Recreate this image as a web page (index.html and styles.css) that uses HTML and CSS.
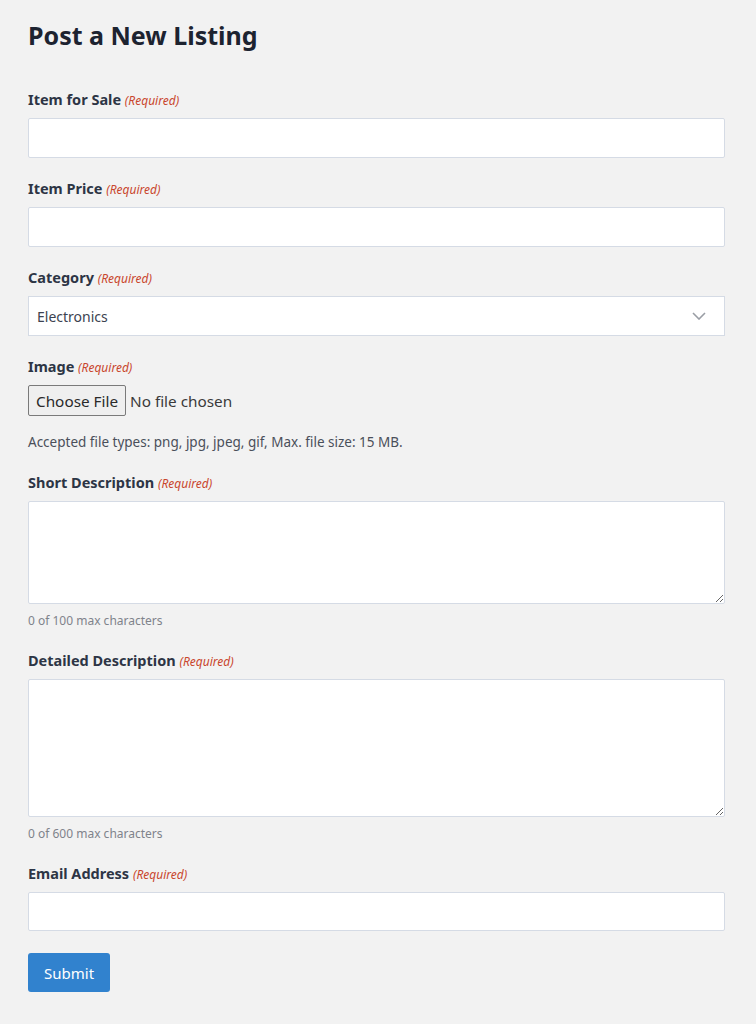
FILE: index.html
```html
<!DOCTYPE html>
<html lang="en">
<head>
    <meta charset="UTF-8">
    <meta name="viewport" content="width=device-width, initial-scale=1.0">
    <title>Post a New Listing</title>
    <link rel="stylesheet" href="styles.css">
</head>
<body>
    <div class="page">
        <h1 class="title">Post a New Listing</h1>
        <form class="listing">
            <div class="field">
                <label class="label">Item for Sale <span class="req">(Required)</span></label>
                <input class="text" type="text">
            </div>
            <div class="field">
                <label class="label">Item Price <span class="req">(Required)</span></label>
                <input class="text" type="text">
            </div>
            <div class="field">
                <label class="label">Category <span class="req">(Required)</span></label>
                <div class="select-wrap">
                    <select class="select">
                        <option>Electronics</option>
                    </select>
                    <svg class="chevron" width="14" height="8" viewBox="0 0 14 8">
                        <path d="M1 1 L7 7 L13 1" fill="none" stroke="#9a9ea5" stroke-width="1.6"/>
                    </svg>
                </div>
            </div>
            <div class="field">
                <label class="label">Image <span class="req">(Required)</span></label>
                <div class="file-row">
                    <span class="file-btn">Choose File</span>
                    <span class="file-name">No file chosen</span>
                </div>
                <div class="hint">Accepted file types: png, jpg, jpeg, gif, Max. file size: 15 MB.</div>
            </div>
            <div class="field">
                <label class="label">Short Description <span class="req">(Required)</span></label>
                <textarea class="area short"></textarea>
                <div class="count">0 of 100 max characters</div>
            </div>
            <div class="field">
                <label class="label">Detailed Description <span class="req">(Required)</span></label>
                <textarea class="area long"></textarea>
                <div class="count">0 of 600 max characters</div>
            </div>
            <div class="field">
                <label class="label">Email Address <span class="req">(Required)</span></label>
                <input class="text email" type="text">
            </div>
            <button class="submit" type="button">Submit</button>
        </form>
    </div>
</body>
</html>
```

FILE: styles.css
```css
body{
    margin: 0;
    background-color: #f2f2f2;
    font-family: "Noto Sans", "Open Sans", sans-serif;
    color: #3c4250;
}
.page{
    padding: 19px 31px 40px 28px;
}
.title{
    margin: 0 0 38px 0;
    font-size: 25px;
    line-height: 32px;
    font-weight: bold;
    color: #1d2330;
}
.field{
    margin-bottom: 20px;
}
.label{
    display: block;
    font-size: 14.5px;
    line-height: 20px;
    font-weight: bold;
    color: #2d3545;
    margin-bottom: 7px;
}
.req{
    font-size: 12px;
    font-weight: normal;
    font-style: italic;
    color: #c9452c;
}
.text, .select, .area{
    display: block;
    box-sizing: border-box;
    width: 100%;
    margin: 0;
    border: 1px solid #d5dbe5;
    border-radius: 2px;
    background-color: #ffffff;
    font-family: "Noto Sans", "Open Sans", sans-serif;
    font-size: 14px;
    color: #3c4250;
}
.text{
    height: 40px;
    padding: 0 8px;
}
.email{
    height: 39px;
}
.select-wrap{
    position: relative;
}
.select{
    height: 40px;
    padding: 0 8px;
    appearance: none;
    -webkit-appearance: none;
    border-radius: 0;
}
.chevron{
    position: absolute;
    right: 19px;
    top: 16px;
}
.file-row{
    display: flex;
    align-items: center;
    gap: 4px;
}
.file-btn{
    box-sizing: border-box;
    height: 31px;
    padding: 0 7px;
    display: flex;
    align-items: center;
    border: 1px solid #7a7a7a;
    border-radius: 2px;
    background-color: #efefef;
    font-size: 15.3px;
    color: #2a2a2a;
}
.file-name{
    font-size: 15.3px;
    color: #3a3a3a;
}
.hint{
    margin-top: 16px;
    font-size: 13.5px;
    line-height: 20px;
    color: #4a4f5a;
}
.area{
    padding: 8px;
    resize: vertical;
}
.short{
    height: 103px;
}
.long{
    height: 138px;
}
.count{
    margin-top: 8px;
    margin-bottom: 2px;
    font-size: 12px;
    line-height: 18px;
    color: #7f838b;
}
.submit{
    display: block;
    height: 39px;
    padding: 0 16px;
    border: none;
    border-radius: 3px;
    background-color: #3182ce;
    color: #ffffff;
    font-family: "Noto Sans", "Open Sans", sans-serif;
    font-size: 15px;
    margin-top: 22px;
}
```
